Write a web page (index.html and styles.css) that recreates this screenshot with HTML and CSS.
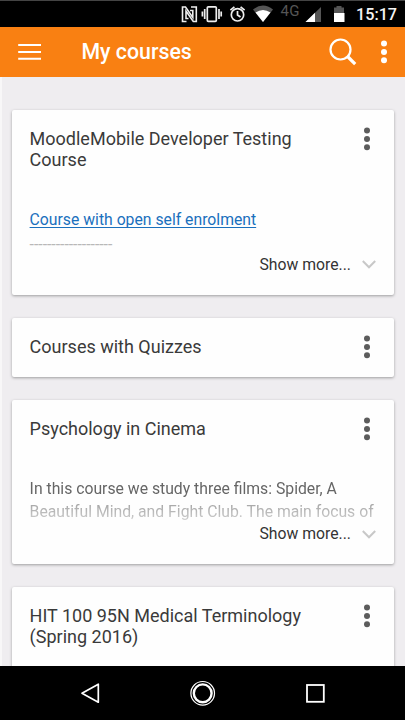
FILE: index.html
```
<!DOCTYPE html>
<html lang="en">
<head>
<meta charset="utf-8">
<title>My courses</title>
<link rel="stylesheet" href="styles.css">
</head>
<body>
<div class="status">
  <svg class="status-icons" width="179" height="27" viewBox="0 0 179 27">
    <g fill="none" stroke="#eee">
      <path d="M16.500 21.500H12.500V7H15.500L22.800 17.500V10.500H20" stroke-width="1.600"/>
      <path d="M21 7H26.300V21.500H23.300L16 11V18.500H18.500" stroke-width="1.600"/>
    </g>
    <g fill="none" stroke="#eee" stroke-width="1.700">
      <rect x="37.300" y="6.800" width="9" height="14.500" rx="1"/>
      <path d="M34.700 9v10M32.400 11.500v5M49 9v10M51.200 11.500v5"/>
      <circle cx="67.500" cy="14.800" r="6.200"/>
      <path d="M67.500 11v4l3 2M60.400 10.200l4-3.400M74.600 10.200l-4-3.400"/>
    </g>
    <path d="M83 9.500Q93 1.500 103 9.500L93 22z" fill="#555"/>
    <path d="M85.500 12.500Q93 7.500 100.500 12.500L93 22z" fill="#fff"/>
    <path d="M135.500 22L151 7v15z" fill="#555"/>
    <path d="M135.500 22l9.500-9.200V22z" fill="#fff"/>
    <path d="M164 7.500h2.500V6h5v1.500h2.500V13h-10z" fill="#555"/>
    <path d="M164 13h10.500v9H164z" fill="#fff"/>
    <text class="network" x="110.500" y="15.500">4G</text>
  </svg>
  <span class="clock">15:17</span>
</div>
<header class="header">
  <svg class="menu" width="24" height="18" viewBox="0 0 24 18"><path d="M.2 2h22.800M.2 9h22.800M.2 15.700h22.800" stroke="#fff" stroke-width="1.900"/></svg>
  <h1>My courses</h1>
  <svg class="search" width="28" height="28" viewBox="0 0 28 28" fill="none" stroke="#fff"><circle cx="11.500" cy="11.500" r="10" stroke-width="2.200"/><path d="M18.600 18.500l7.600 7.600" stroke-width="3.200"/></svg>
  <svg class="dots" width="8" height="24" viewBox="0 0 8 24"><g fill="#fff"><circle cx="4" cy="3.500" r="3"/><circle cx="4" cy="12" r="3"/><circle cx="4" cy="20.300" r="3"/></g></svg>
</header>
<main class="content">
  <article class="card">
    <div class="card-head"><h2>MoodleMobile Developer Testing<br>Course</h2>
      <svg class="dots" width="8" height="24" viewBox="0 0 8 24"><g fill="#5c5c5c"><circle cx="4" cy="3.500" r="3"/><circle cx="4" cy="12" r="3"/><circle cx="4" cy="20.300" r="3"/></g></svg></div>
    <div class="summary"><a href="#">Course with open self enrolment</a><span class="rule">-------------------</span></div>
    <div class="more">Show more...<svg width="14" height="9" viewBox="0 0 14 9"><path d="M.8 1L7 7.300 13.200 1" fill="none" stroke="#c8c8c8" stroke-width="2"/></svg></div>
  </article>
  <article class="card">
    <div class="card-head"><h2>Courses with Quizzes</h2>
      <svg class="dots" width="8" height="24" viewBox="0 0 8 24"><g fill="#5c5c5c"><circle cx="4" cy="3.500" r="3"/><circle cx="4" cy="12" r="3"/><circle cx="4" cy="20.300" r="3"/></g></svg></div>
  </article>
  <article class="card psychology">
    <div class="card-head"><h2>Psychology in Cinema</h2>
      <svg class="dots" width="8" height="24" viewBox="0 0 8 24"><g fill="#5c5c5c"><circle cx="4" cy="3.500" r="3"/><circle cx="4" cy="12" r="3"/><circle cx="4" cy="20.300" r="3"/></g></svg></div>
    <div class="summary fade">In this course we study three films: Spider, A<br>Beautiful Mind, and Fight Club. The main focus of</div>
    <div class="more">Show more...<svg width="14" height="9" viewBox="0 0 14 9"><path d="M.8 1L7 7.300 13.200 1" fill="none" stroke="#c8c8c8" stroke-width="2"/></svg></div>
  </article>
  <article class="card last">
    <div class="card-head"><h2>HIT 100 95N Medical Terminology<br>(Spring 2016)</h2>
      <svg class="dots" width="8" height="24" viewBox="0 0 8 24"><g fill="#5c5c5c"><circle cx="4" cy="3.500" r="3"/><circle cx="4" cy="12" r="3"/><circle cx="4" cy="20.300" r="3"/></g></svg></div>
  </article>
</main>
<nav class="nav">
  <svg width="405" height="54" viewBox="0 0 405 54" fill="none" stroke="#fff">
    <path d="M98.300 18.200v18L82 27.200z" stroke-width="1.700" stroke-linejoin="round"/>
    <circle cx="202.700" cy="27.300" r="11.800" stroke-width="1.200"/>
    <circle cx="202.700" cy="27.300" r="8.900" stroke-width="2.400"/>
    <rect x="307" y="19" width="16.800" height="16.800" stroke-width="1.800"/>
  </svg>
</nav>
</body>
</html>
```
FILE: styles.css
```
* { box-sizing: border-box; }
body {
  margin: 0;
  width: 405px;
  height: 720px;
  overflow: hidden;
  display: flex;
  flex-direction: column;
  background: #efedf0;
  font-family: Roboto, "Liberation Sans", sans-serif;
}
.status {
  height: 27px;
  flex: none;
  display: flex;
  align-items: center;
  padding-left: 170px;
  background: #000;
  color: #f4f4f4;
  border-top: 1px solid #444;
}
.status-icons { flex: none; margin-top: -1px; }
.network { font-size: 15px; fill: #555; letter-spacing: .3px; }
.clock { margin-left: 7px; padding-top: 2px; font-size: 16.2px; font-weight: 500; line-height: 26px; }
.header {
  height: 50px;
  flex: none;
  display: flex;
  align-items: center;
  padding: 0 17px 0 18px;
  background: #f98012;
  color: #fff;
}
.header h1 {
  margin: 0 auto 0 39.5px;
  padding-bottom: 2px;
  font-size: 21.3px;
  font-weight: 500;
}
.search { margin-right: 23px; }
.content {
  flex: 1;
  min-height: 0;
  overflow: hidden;
  padding: 32.6px 11px 0 10px;
  border-left: 2px solid #f8f7f8;
}
.card {
  height: 59.6px;
  margin-bottom: 22.6px;
  padding: 18px 17px 0 17.6px;
  background: #fefefe;
  border-radius: 2px;
  box-shadow: 0 1px 3px rgba(0, 0, 0, .34);
}
.card:first-child { height: 185.4px; }
.psychology { height: 164.2px; }
.last { height: 120px; }
.card-head { display: flex; justify-content: space-between; align-items: flex-start; }
.card-head .dots { margin: -1px 6px 0 0; flex: none; }
h2 {
  margin: 0;
  font-size: 18px;
  font-weight: 400;
  line-height: 21.4px;
  color: #3a3a3a;
  white-space: nowrap;
}
.summary {
  margin-top: 38.5px;
  height: 45px;
  font-size: 15.75px;
  line-height: 22.5px;
  color: #666;
  white-space: nowrap;
}
.psychology .summary { margin-top: 37.5px; }
.summary a { color: #1a70bd; text-underline-offset: 2px; text-decoration-thickness: 1px; text-decoration-skip-ink: none; }
.rule { display: block; padding-top: 3px; color: #b8b8b8; }
.fade {
  -webkit-mask-image: linear-gradient(#000 40%, rgba(0, 0, 0, .6) 55%, rgba(0, 0, 0, .3) 95%);
  mask-image: linear-gradient(#000 40%, rgba(0, 0, 0, .6) 55%, rgba(0, 0, 0, .3) 95%);
}
.more {
  display: flex;
  justify-content: flex-end;
  align-items: center;
  gap: 11px;
  padding-right: 1px;
  font-size: 15.75px;
  line-height: 22px;
  color: #333;
}
.nav { height: 54px; flex: none; background: #000; }
.nav svg { display: block; }
```
